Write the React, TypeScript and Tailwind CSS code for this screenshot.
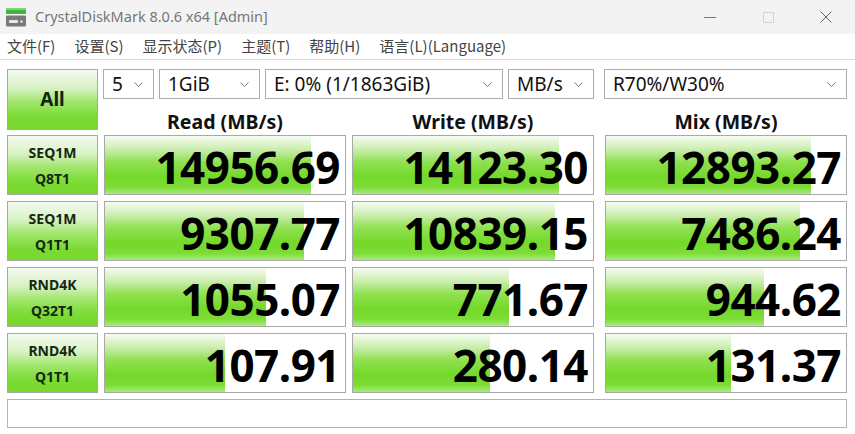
import React from "react";

type Result = {
  line1: string;
  line2: string;
  cells: { value: string; pct: number }[];
};

const results: Result[] = [
  {
    line1: "SEQ1M",
    line2: "Q8T1",
    cells: [
      { value: "14956.69", pct: 86 },
      { value: "14123.30", pct: 86 },
      { value: "12893.27", pct: 85.5 },
    ],
  },
  {
    line1: "SEQ1M",
    line2: "Q1T1",
    cells: [
      { value: "9307.77", pct: 83 },
      { value: "10839.15", pct: 84 },
      { value: "7486.24", pct: 81 },
    ],
  },
  {
    line1: "RND4K",
    line2: "Q32T1",
    cells: [
      { value: "1055.07", pct: 67 },
      { value: "771.67", pct: 65 },
      { value: "944.62", pct: 66 },
    ],
  },
  {
    line1: "RND4K",
    line2: "Q1T1",
    cells: [
      { value: "107.91", pct: 50 },
      { value: "280.14", pct: 57 },
      { value: "131.37", pct: 52 },
    ],
  },
];

const menuItems = ["文件(F)", "设置(S)", "显示状态(P)", "主题(T)", "帮助(H)", "语言(L)(Language)"];

const uiFont = "font-['Segoe_UI','Noto_Sans','Noto_Sans_CJK_SC',sans-serif]";
const btnGradient =
  "bg-[linear-gradient(to_bottom,#f3faef_0%,#d9f2c6_30%,#9fe56a_55%,#7bdb33_80%,#78d82e_100%)]";
const barGradient =
  "bg-[linear-gradient(to_bottom,#f6fcf2_0%,#cdeeb1_22%,#8fe150_45%,#74d92a_70%,#7ddc36_88%,#a9ea7c_100%)]";

function AppIcon() {
  return (
    <svg width="20" height="19" viewBox="0 0 20 19">
      <rect x="0" y="0" width="20" height="6" rx="1" fill="#3db54a" />
      <rect x="0" y="0" width="20" height="2" fill="#7fd86a" />
      <rect x="0" y="7.5" width="20" height="11" rx="1.5" fill="#7a7a7a" />
      <rect x="3" y="12" width="9" height="3" rx="1" fill="#e8e8e8" />
      <circle cx="15.5" cy="13.5" r="1.2" fill="#e8e8e8" />
    </svg>
  );
}

function Chevron() {
  return (
    <svg width="9" height="5" viewBox="0 0 9 5" className="shrink-0">
      <path d="M0.5 0.5 L4.5 4.5 L8.5 0.5" fill="none" stroke="#7a7a7a" strokeWidth="1" />
    </svg>
  );
}

function Select({ label, width, ml }: { label: string; width: string; ml: string }) {
  return (
    <div
      className={`${width} ${ml} h-[30px] flex items-center justify-between border border-[#adadad] bg-white pl-[8px] pr-[10px] text-[19px] text-[#111] ${uiFont}`}
    >
      <span>{label}</span>
      <Chevron />
    </div>
  );
}

function ResultCell({ value, pct, ml }: { value: string; pct: number; ml: string }) {
  return (
    <div className={`relative ${ml} w-[242px] h-[60px] border border-[#a8a8a8] bg-white`}>
      <div className={`absolute left-0 top-0 bottom-0 ${barGradient}`} style={{ width: `${pct}%` }} />
      <div className="relative h-full flex items-center justify-end pr-[5px] pt-[4px] font-['Noto_Sans',sans-serif] font-bold text-[44px] leading-[52px] text-black tracking-[-0.5px]">
        {value}
      </div>
    </div>
  );
}

export default function App() {
  return (
    <div className={`w-[855px] h-[434px] overflow-hidden bg-white flex flex-col ${uiFont}`}>
      <div className="h-[34px] bg-[#f3f3f3] flex items-center pl-[6px]">
        <AppIcon />
        <span className="ml-[9px] text-[14.5px] text-[#777]">CrystalDiskMark 8.0.6 x64 [Admin]</span>
        <div className="ml-auto flex items-center h-full">
          <div className="w-[58px] flex justify-center">
            <div className="w-[12px] h-px bg-[#777]" />
          </div>
          <div className="w-[58px] flex justify-center">
            <div className="w-[11px] h-[11px] border border-[#d4d4d4]" />
          </div>
          <div className="w-[58px] flex justify-center">
            <svg width="12" height="12" viewBox="0 0 12 12">
              <path d="M0.5 0.5 L11.5 11.5 M11.5 0.5 L0.5 11.5" stroke="#666" strokeWidth="1" />
            </svg>
          </div>
        </div>
      </div>

      <div className="h-[26px] bg-white flex items-center pl-[7px] gap-[19px] text-[15px] text-[#444] font-['Noto_Sans_CJK_SC','Noto_Sans',sans-serif] border-b border-[#dcdcdc]">
        {menuItems.map((m) => (
          <span key={m}>{m}</span>
        ))}
      </div>

      <div className="flex flex-col pl-[7px] pt-[9px]">
        <div className="flex">
          <div
            className={`w-[91px] h-[61px] border border-[#a8a8a8] ${btnGradient} flex items-center justify-center text-[19px] font-bold text-[#102510]`}
          >
            All
          </div>
          <div className="flex flex-col">
            <div className="flex">
              <Select label="5" width="w-[51px]" ml="ml-[5px]" />
              <Select label="1GiB" width="w-[101px]" ml="ml-[5px]" />
              <Select label="E: 0% (1/1863GiB)" width="w-[238px]" ml="ml-[5px]" />
              <Select label="MB/s" width="w-[86px]" ml="ml-[5px]" />
              <Select label="R70%/W30%" width="w-[243px]" ml="ml-[10px]" />
            </div>
            <div className="flex mt-[13px] h-[20px] items-center text-[19.5px] leading-[20px] font-bold text-[#111]">
              <div className="ml-[6px] w-[242px] text-center">Read (MB/s)</div>
              <div className="ml-[6px] w-[242px] text-center">Write (MB/s)</div>
              <div className="ml-[11px] w-[242px] text-center">Mix (MB/s)</div>
            </div>
          </div>
        </div>

        <div className="flex flex-col gap-[6px] mt-[3px]">
          {results.map((r, i) => (
            <div key={i} className="flex">
              <div
                className={`w-[91px] h-[60px] border border-[#a8a8a8] ${btnGradient} flex flex-col items-center justify-center pt-[2px] text-[14px] font-bold leading-[26px] text-[#142814]`}
              >
                <span>{r.line1}</span>
                <span>{r.line2}</span>
              </div>
              <ResultCell value={r.cells[0].value} pct={r.cells[0].pct} ml="ml-[6px]" />
              <ResultCell value={r.cells[1].value} pct={r.cells[1].pct} ml="ml-[6px]" />
              <ResultCell value={r.cells[2].value} pct={r.cells[2].pct} ml="ml-[11px]" />
            </div>
          ))}
        </div>

        <div className="mt-[6px] w-[840px] h-[29px] border border-[#b4b4b4] bg-white" />
      </div>
    </div>
  );
}
